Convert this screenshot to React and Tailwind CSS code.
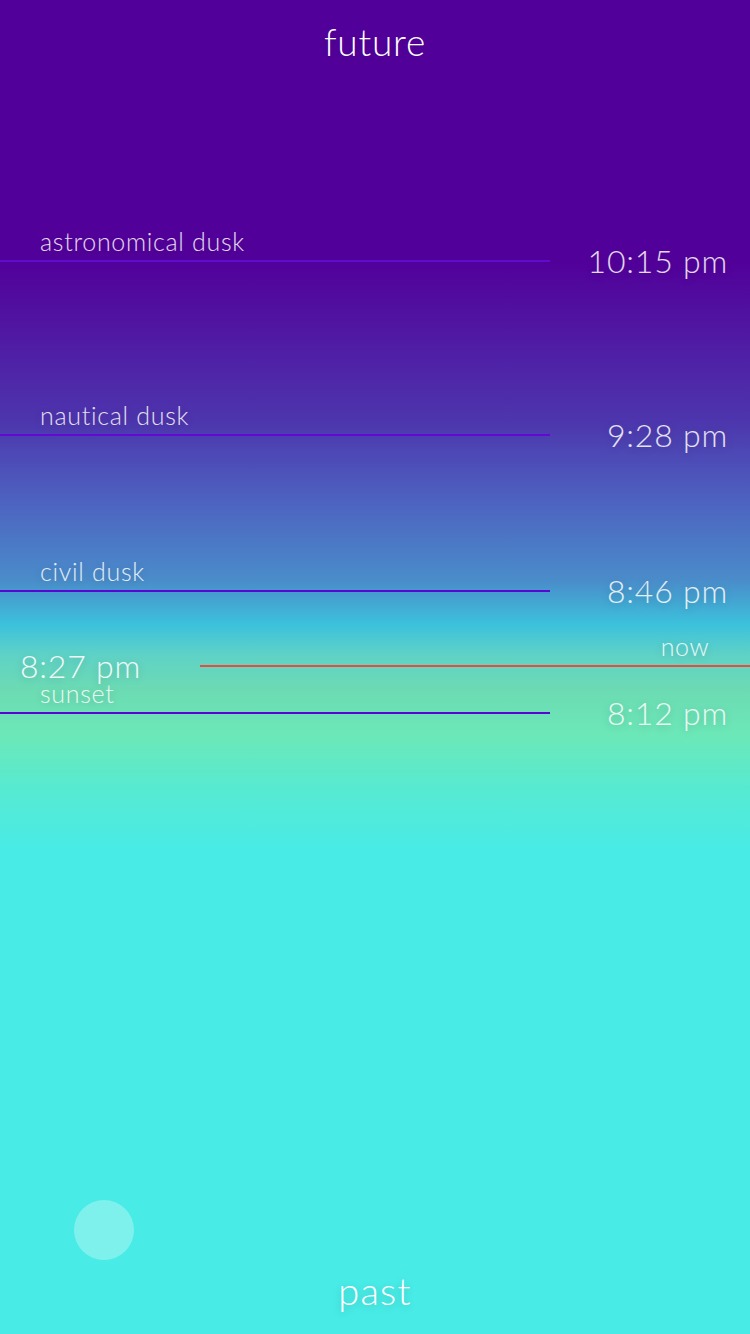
export default function App() {
  const markers = [
    { label: "astronomical dusk", time: "10:15 pm", top: "top-[261px]", line: "bg-[#5f0ccf]" },
    { label: "nautical dusk", time: "9:28 pm", top: "top-[435px]", line: "bg-[#6408d4]" },
    { label: "civil dusk", time: "8:46 pm", top: "top-[591px]", line: "bg-[#5a06d2]" },
    { label: "sunset", time: "8:12 pm", top: "top-[713px]", line: "bg-[#5a06d2]" },
  ];

  const shadow = "[text-shadow:0_2px_8px_rgba(0,0,0,0.18)]";

  return (
    <div className="relative w-[750px] h-[1334px] overflow-hidden font-['Lato','Open_Sans',sans-serif] font-light text-white bg-[linear-gradient(to_bottom,#52009a_0px,#52009a_262px,#4d35ad_420px,#4d62c0_500px,#4a8cca_580px,#3cc2dc_625px,#5fd2c6_655px,#6cdbb3_690px,#6ce8b8_735px,#56ead2_790px,#48ebe6_850px,#48ebe6_1334px)]">
      <div className="flex flex-col items-center justify-between h-full pt-[19px] pb-[21px]">
        <div className={`text-[37px] leading-[46px] tracking-[0.8px] ${shadow}`}>future</div>
        <div className="flex flex-col items-center w-full">
          <div className="self-start ml-[74px] mb-[7px] w-[60px] h-[60px] rounded-full bg-white/30" />
          <div className={`text-[38px] leading-[46px] tracking-[1.2px] ${shadow}`}>past</div>
        </div>
      </div>

      {markers.map((m) => (
        <div key={m.label} className={`absolute inset-x-0 ${m.top} -translate-y-1/2 flex items-center`}>
          <div className={`relative w-[550px] h-[2px] ${m.line}`}>
            <span className={`absolute left-[40px] bottom-[7px] whitespace-nowrap text-[25px] leading-[28px] text-white/85 tracking-[0.7px] ${shadow}`}>
              {m.label}
            </span>
          </div>
          <div className={`flex-1 text-right pr-[22px] text-[32px] leading-[38px] tracking-[0.8px] text-white/85 ${shadow}`}>
            {m.time}
          </div>
        </div>
      ))}

      <div className="absolute inset-x-0 top-[666px] -translate-y-1/2 flex items-center">
        <div className={`w-[200px] pl-[20px] text-[32px] leading-[38px] tracking-[0.8px] text-white/90 ${shadow}`}>
          8:27 pm
        </div>
        <div className="relative flex-1 h-[2px] bg-[#ec4a3c]">
          <span className={`absolute right-[41px] bottom-[7px] text-[25px] leading-[28px] tracking-[0.5px] text-white/85 ${shadow}`}>
            now
          </span>
        </div>
      </div>
    </div>
  );
}
